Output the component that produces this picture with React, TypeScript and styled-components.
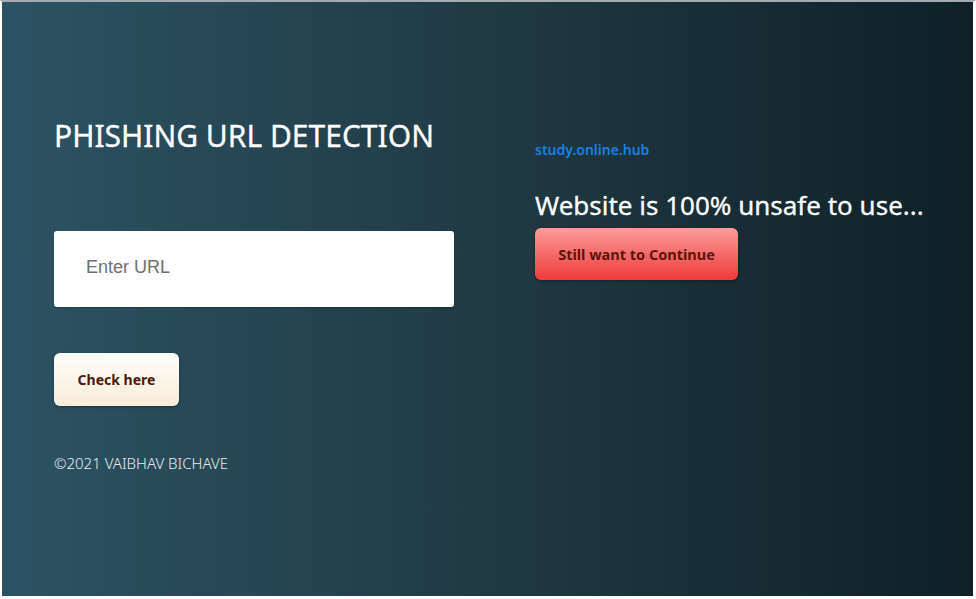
import styled, { createGlobalStyle } from "styled-components";

const GlobalStyle = createGlobalStyle`
  html, body {
    margin: 0;
    padding: 0;
    height: 100%;
  }
  body {
    font-family: "Noto Sans", "Open Sans", sans-serif;
    background: #fff;
  }
  #root {
    height: 100%;
  }
`;

export default function App() {
  return (
    <>
      <GlobalStyle />
      <Frame>
        <Page>
          <LeftCol>
            <Title>PHISHING URL DETECTION</Title>
            <UrlInput type="text" placeholder="Enter URL" />
            <CheckButton>Check here</CheckButton>
            <Copyright>©2021 VAIBHAV BICHAVE</Copyright>
          </LeftCol>
          <RightCol>
            <SiteLink href="#">study.online.hub</SiteLink>
            <Verdict>Website is 100% unsafe to use...</Verdict>
            <ContinueButton>Still want to Continue</ContinueButton>
          </RightCol>
        </Page>
      </Frame>
    </>
  );
}

const Frame = styled.div`
  box-sizing: border-box;
  height: 100vh;
  border-top: 2px solid #a4abb0;
  border-left: 2px solid #fff;
  border-right: 3px solid #fff;
  border-bottom: 3px solid #fff;
`;

const Page = styled.div`
  height: 100%;
  background: linear-gradient(to right, #2c5364, #203a43, #0f2027);
  display: grid;
  grid-template-columns: 400px 1fr;
  column-gap: 81px;
  padding-left: 52px;
  box-sizing: border-box;
`;

const LeftCol = styled.div`
  display: flex;
  flex-direction: column;
  align-items: flex-start;
  padding-top: 116px;
`;

const Title = styled.h1`
  margin: 0 0 77px;
  font-size: 30px;
  line-height: 36px;
  font-weight: 400;
  color: #fff;
  -webkit-text-stroke: 0.3px #fff;
`;

const UrlInput = styled.input`
  box-sizing: border-box;
  width: 400px;
  height: 76px;
  border: none;
  border-radius: 3px;
  background: #fff;
  padding: 0 32px 4px;
  font-family: "Liberation Sans", Arial, sans-serif;
  font-size: 18px;
  color: #333;
  outline: none;
  box-shadow: 0 1px 2px rgba(0, 0, 0, 0.25);

  &::placeholder {
    color: #6f6f6f;
  }
`;

const BaseButton = styled.button`
  box-sizing: border-box;
  height: 53px;
  border: none;
  border-radius: 6px;
  font-family: "Noto Sans", "Open Sans", sans-serif;
  font-size: 14px;
  font-weight: 700;
  cursor: pointer;
  box-shadow: 0 1px 3px rgba(0, 0, 0, 0.35);
`;

const CheckButton = styled(BaseButton)`
  margin-top: 46px;
  width: 125px;
  color: #4a1a08;
  background: linear-gradient(to bottom, #fffefb, #f9ecda);
`;

const Copyright = styled.p`
  margin: 47px 0 0;
  font-size: 15px;
  line-height: 20px;
  color: #e8eef0;
  font-weight: 300;
`;

const RightCol = styled.div`
  display: flex;
  flex-direction: column;
  align-items: flex-start;
  padding-top: 138px;
`;

const SiteLink = styled.a`
  font-size: 14px;
  line-height: 20px;
  font-weight: 600;
  color: #1b80e6;
  text-decoration: none;
`;

const Verdict = styled.h2`
  margin: 29px 0 7px;
  font-size: 26px;
  line-height: 32px;
  font-weight: 400;
  color: #fff;
  -webkit-text-stroke: 0.3px #fff;
`;

const ContinueButton = styled(BaseButton)`
  width: 203px;
  height: 52px;
  font-size: 14.5px;
  color: #5a1608;
  background: linear-gradient(to bottom, #fc9c9c, #ef3a3a);
`;
